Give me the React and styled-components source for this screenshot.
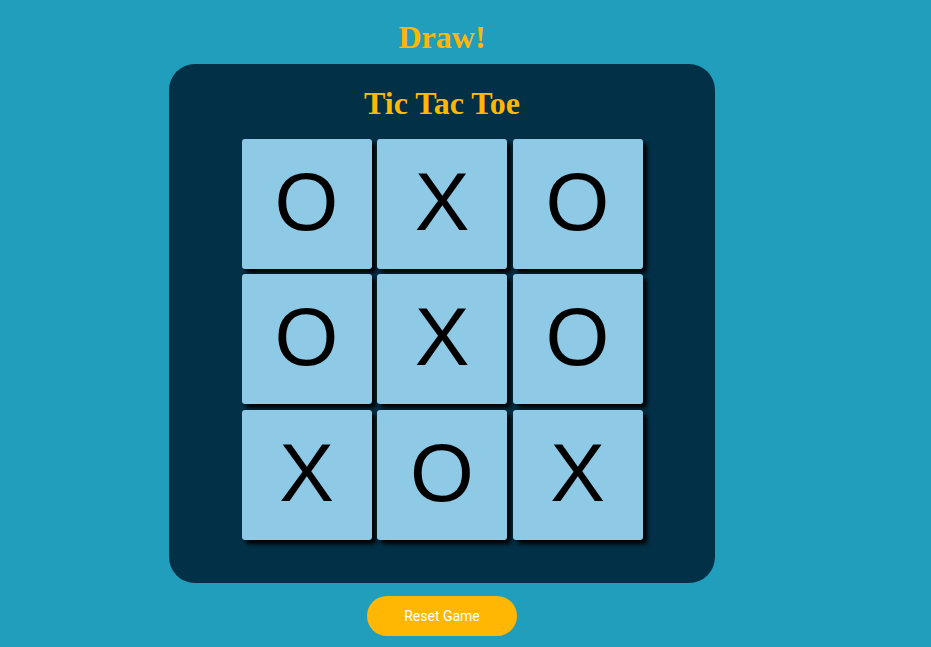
import React, { useState } from "react";
import styled, { createGlobalStyle } from "styled-components";

const Global = createGlobalStyle`
  html, body { margin: 0; padding: 0; }
  body {
    background: #219ebc;
    font-family: "Liberation Sans", Arial, sans-serif;
    min-height: 647px;
  }
`;

const Page = styled.div`
  display: flex;
  flex-direction: column;
  align-items: center;
  padding-right: 47px;
`;

const Status = styled.h1`
  margin: 20px 0 8.6px;
  font-family: "Liberation Serif", "Times New Roman", serif;
  font-size: 32px;
  font-weight: bold;
  color: #ffb703;
  line-height: 35.4px;
`;

const Board = styled.div`
  width: 546px;
  height: 519px;
  box-sizing: border-box;
  background: #023047;
  border-radius: 26px;
  padding-top: 21.5px;
  display: flex;
  flex-direction: column;
  align-items: center;
`;

const Heading = styled.h2`
  margin: 0 0 18px;
  font-family: "Liberation Serif", "Times New Roman", serif;
  font-size: 32px;
  font-weight: bold;
  color: #ffb703;
  line-height: 35.4px;
`;

const Grid = styled.div`
  display: grid;
  grid-template-columns: repeat(3, 130px);
  grid-auto-rows: 130px;
  gap: 5.5px;
`;

const Cell = styled.button`
  border: none;
  padding: 0 0 4px;
  margin: 0;
  background: #8ecae6;
  border-radius: 3px;
  box-shadow: 4px 4px 4px #000;
  font-family: "Liberation Sans", Arial, sans-serif;
  font-size: 82px;
  color: #000;
  display: flex;
  align-items: center;
  justify-content: center;
  cursor: pointer;
  line-height: 1;
`;

const Reset = styled.button`
  margin-top: 13px;
  width: 150px;
  height: 40px;
  border: none;
  border-radius: 20px;
  background: #ffb703;
  color: #fff;
  font-family: Roboto, "Liberation Sans", Arial, sans-serif;
  font-size: 14px;
  cursor: pointer;
`;

const initial = ["O", "X", "O", "O", "X", "O", "X", "O", "X"];

export default function App() {
  const [cells, setCells] = useState(initial);
  return (
    <Page>
      <Global />
      <Status>Draw!</Status>
      <Board>
        <Heading>Tic Tac Toe</Heading>
        <Grid>
          {cells.map((c, i) => (
            <Cell key={i}>{c}</Cell>
          ))}
        </Grid>
      </Board>
      <Reset onClick={() => setCells(Array(9).fill(""))}>Reset Game</Reset>
    </Page>
  );
}
